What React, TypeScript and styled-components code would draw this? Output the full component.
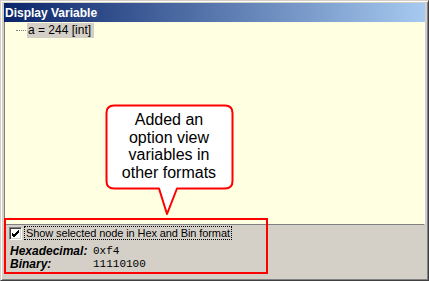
import React from "react";
import styled, { createGlobalStyle } from "styled-components";

const Global = createGlobalStyle`
  html, body { margin: 0; padding: 0; background: #d4d0c8; }
  * { box-sizing: border-box; }
`;

const Window = styled.div`
  position: relative;
  width: 429px;
  height: 281px;
  display: flex;
  flex-direction: column;
  background: #d4d0c8;
  border: 1px solid;
  border-color: #d4d0c8 #404040 #404040 #d4d0c8;
  box-shadow: inset 1px 1px #ffffff, inset -1px -1px #808080;
  padding: 2px 3px 3px 3px;
  font-family: "Liberation Sans", Arial, sans-serif;
`;

const TitleBar = styled.div`
  height: 19px;
  flex: none;
  display: flex;
  align-items: center;
  padding-left: 1px;
  background: linear-gradient(to right, #0a246a, #a6caf0);
  color: #ffffff;
  font-weight: bold;
  font-size: 12px;
`;

const Pane = styled.div`
  flex: 1;
  background: #ffffe1;
  border-left: 1px solid #808080;
  border-bottom: 1px solid #808080;
  border-right: 1px solid #ffffff;
  padding-top: 1px;
`;

const TreeRow = styled.div`
  display: flex;
  align-items: center;
  height: 15px;
  padding-left: 11px;
`;

const TreeLine = styled.span`
  width: 10px;
  height: 0;
  border-top: 1px dotted #808080;
  margin-right: 1px;
`;

const TreeLabel = styled.span`
  background: #d4d0c8;
  color: #000;
  font-size: 12px;
  line-height: 15px;
  padding: 0 3px 0 1px;
  height: 15px;
`;

const BottomPanel = styled.div`
  height: 52px;
  flex: none;
  padding: 1px 0 0 5px;
  color: #000;
`;

const CheckRow = styled.div`
  display: flex;
  align-items: center;
  height: 14px;
`;

const CheckBox = styled.span`
  width: 13px;
  height: 13px;
  flex: none;
  background: #fff;
  border: 1px solid;
  border-color: #808080 #ffffff #ffffff #808080;
  box-shadow: inset 1px 1px #404040, inset -1px -1px #d4d0c8;
  display: flex;
  align-items: center;
  justify-content: center;
`;

const CheckLabel = styled.span`
  margin-left: 3px;
  font-size: 11px;
  line-height: 12px;
  padding: 0 1px;
  outline: 1px dotted #000;
  outline-offset: 0;
  letter-spacing: -0.1px;
`;

const InfoGrid = styled.div`
  margin-top: 5px;
  display: grid;
  grid-template-columns: 83px auto;
  grid-auto-rows: 13px;
  align-items: center;
  padding-left: 1px;
`;

const InfoLabel = styled.span`
  font-weight: bold;
  font-style: italic;
  font-size: 12px;
  line-height: 13px;
`;

const InfoValue = styled.span`
  font-family: "Liberation Mono", "Courier New", monospace;
  font-size: 11px;
  line-height: 13px;
`;

const Highlight = styled.div`
  position: absolute;
  left: 3px;
  top: 217px;
  width: 264px;
  height: 56px;
  border: 2px solid #ff0000;
  pointer-events: none;
`;

const Callout = styled.div`
  position: absolute;
  left: 104px;
  top: 103px;
  width: 130px;
  height: 113px;
`;

const CalloutShape = styled.svg`
  position: absolute;
  left: 0;
  top: 0;
`;

const CalloutText = styled.div`
  position: relative;
  width: 128px;
  padding-top: 7px;
  text-align: center;
  font-family: "Liberation Sans", Arial, sans-serif;
  font-size: 16px;
  line-height: 17.7px;
  color: #000;
`;

export default function App() {
  return (
    <>
      <Global />
      <Window>
        <TitleBar>Display Variable</TitleBar>
        <Pane>
          <TreeRow>
            <TreeLine />
            <TreeLabel>a = 244 [int]</TreeLabel>
          </TreeRow>
        </Pane>
        <BottomPanel>
          <CheckRow>
            <CheckBox>
              <svg width="9" height="9" viewBox="0 0 9 9">
                <path d="M1 4 L3 6 L8 1 M1 5 L3 7 L8 2 M1 6 L3 8 L8 3" stroke="#000" strokeWidth="1" fill="none" />
              </svg>
            </CheckBox>
            <CheckLabel>Show selected node in Hex and Bin format</CheckLabel>
          </CheckRow>
          <InfoGrid>
            <InfoLabel>Hexadecimal:</InfoLabel>
            <InfoValue>0xf4</InfoValue>
            <InfoLabel>Binary:</InfoLabel>
            <InfoValue>11110100</InfoValue>
          </InfoGrid>
        </BottomPanel>
        <Highlight />
        <Callout>
          <CalloutShape width="130" height="113" viewBox="0 0 130 113">
            <path
              d="M9 1.5 H120 Q127.5 1.5 127.5 9 V77 Q127.5 84.5 120 84.5 H72 L62 110 L54 84.5 H9 Q1.5 84.5 1.5 77 V9 Q1.5 1.5 9 1.5 Z"
              fill="#ffffff"
              stroke="#ff0000"
              strokeWidth="2"
              strokeLinejoin="round"
            />
          </CalloutShape>
          <CalloutText>
            Added an
            <br />
            option view
            <br />
            variables in
            <br />
            other formats
          </CalloutText>
        </Callout>
      </Window>
    </>
  );
}
